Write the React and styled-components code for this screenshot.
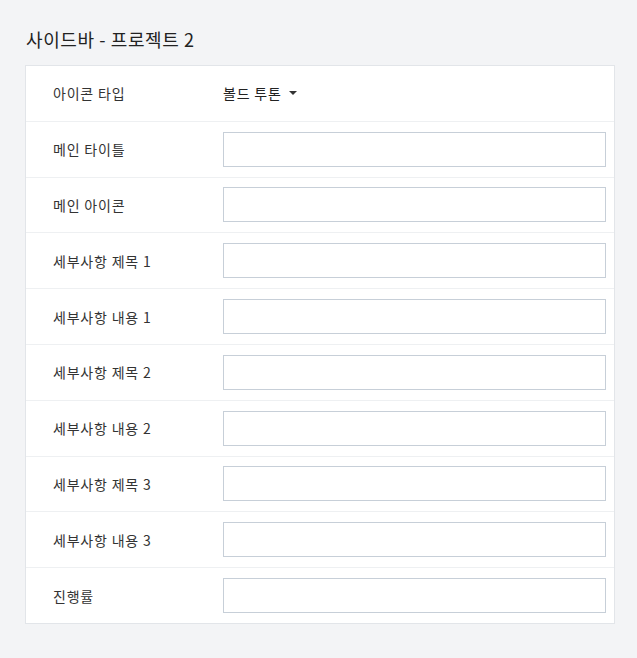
import React from 'react';
import styled, { createGlobalStyle } from 'styled-components';

const GlobalStyle = createGlobalStyle`
    html, body {
        margin: 0;
        padding: 0;
        background: #f3f4f6;
        font-family: "Noto Sans CJK KR", "Noto Sans", sans-serif;
    }
`

const Page = styled.div`
    padding: 24px 22px 34px 25px;
`

const Title = styled.h2`
    margin: 0 0 11px 1px;
    font-size: 18px;
    font-weight: 400;
    line-height: 30px;
    letter-spacing: 0.6px;
    color: #222;
`

const Card = styled.div`
    background: #fff;
    border: 1px solid #e2e5e9;
`

const Row = styled.div`
    display: flex;
    align-items: center;
    height: 54.8px;
    padding: 0 8px 0 27px;
    border-top: ${({ first }) => (first ? 'none' : '1px solid #eef0f2')};
`

const Label = styled.div`
    width: 170px;
    flex-shrink: 0;
    font-size: 14px;
    letter-spacing: 0.8px;
    color: #333;
`

const Input = styled.input`
    flex: 1;
    height: 35px;
    box-sizing: border-box;
    border: 1px solid #c7cfd8;
    border-radius: 0;
    padding: 0 8px;
    font-size: 14px;
    outline: none;
`

const Dropdown = styled.div`
    display: flex;
    align-items: center;
    gap: 7px;
    font-size: 14px;
    letter-spacing: 0.8px;
    color: #222;
    cursor: pointer;
`

const Caret = styled.span`
    width: 0;
    height: 0;
    border-left: 4px solid transparent;
    border-right: 4px solid transparent;
    border-top: 4px solid #333;
`

const fields = [
    '메인 타이틀',
    '메인 아이콘',
    '세부사항 제목 1',
    '세부사항 내용 1',
    '세부사항 제목 2',
    '세부사항 내용 2',
    '세부사항 제목 3',
    '세부사항 내용 3',
    '진행률',
]

const App = () => (
    <>
        <GlobalStyle />
        <Page>
            <Title>사이드바 - 프로젝트 2</Title>
            <Card>
                <Row first>
                    <Label>아이콘 타입</Label>
                    <Dropdown>
                        볼드 투톤
                        <Caret />
                    </Dropdown>
                </Row>
                {fields.map((name) => (
                    <Row key={name}>
                        <Label>{name}</Label>
                        <Input />
                    </Row>
                ))}
            </Card>
        </Page>
    </>
)

export default App;
